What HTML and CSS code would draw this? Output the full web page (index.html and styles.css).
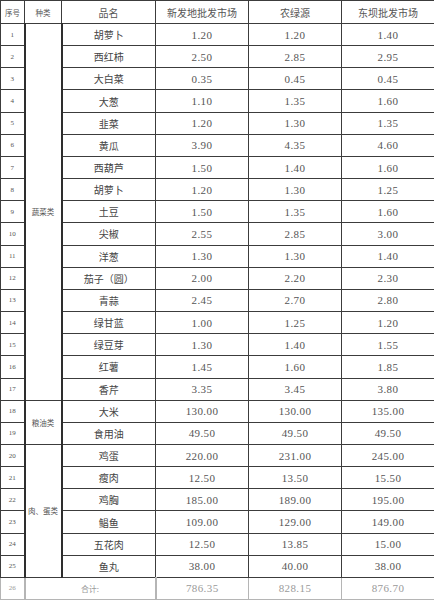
FILE: index.html
```html
<!DOCTYPE html>
<html lang="zh">
<head>
<meta charset="utf-8">
<title>价格表</title>
<link rel="stylesheet" href="styles.css">
</head>
<body>
<table class="price">
<colgroup>
<col class="c-no"><col class="c-kind"><col class="c-name"><col class="c-v"><col class="c-v"><col class="c-v">
</colgroup>
<thead>
<tr class="head"><th class="small">序号</th><th class="small">种类</th><th>品名</th><th>新发地批发市场</th><th>农绿源</th><th>东坝批发市场</th></tr>
</thead>
<tbody>
<tr><td class="no">1</td><td class="kind" rowspan="17">蔬菜类</td><td class="name">胡萝卜</td><td class="num">1.20</td><td class="num">1.20</td><td class="num">1.40</td></tr>
<tr><td class="no">2</td><td class="name">西红柿</td><td class="num">2.50</td><td class="num">2.85</td><td class="num">2.95</td></tr>
<tr><td class="no">3</td><td class="name">大白菜</td><td class="num">0.35</td><td class="num">0.45</td><td class="num">0.45</td></tr>
<tr><td class="no">4</td><td class="name">大葱</td><td class="num">1.10</td><td class="num">1.35</td><td class="num">1.60</td></tr>
<tr><td class="no">5</td><td class="name">韭菜</td><td class="num">1.20</td><td class="num">1.30</td><td class="num">1.35</td></tr>
<tr><td class="no">6</td><td class="name">黄瓜</td><td class="num">3.90</td><td class="num">4.35</td><td class="num">4.60</td></tr>
<tr><td class="no">7</td><td class="name">西葫芦</td><td class="num">1.50</td><td class="num">1.40</td><td class="num">1.60</td></tr>
<tr><td class="no">8</td><td class="name">胡萝卜</td><td class="num">1.20</td><td class="num">1.30</td><td class="num">1.25</td></tr>
<tr><td class="no">9</td><td class="name">土豆</td><td class="num">1.50</td><td class="num">1.35</td><td class="num">1.60</td></tr>
<tr><td class="no">10</td><td class="name">尖椒</td><td class="num">2.55</td><td class="num">2.85</td><td class="num">3.00</td></tr>
<tr><td class="no">11</td><td class="name">洋葱</td><td class="num">1.30</td><td class="num">1.30</td><td class="num">1.40</td></tr>
<tr><td class="no">12</td><td class="name">茄子（圆）</td><td class="num">2.00</td><td class="num">2.20</td><td class="num">2.30</td></tr>
<tr><td class="no">13</td><td class="name">青蒜</td><td class="num">2.45</td><td class="num">2.70</td><td class="num">2.80</td></tr>
<tr><td class="no">14</td><td class="name">绿甘蓝</td><td class="num">1.00</td><td class="num">1.25</td><td class="num">1.20</td></tr>
<tr><td class="no">15</td><td class="name">绿豆芽</td><td class="num">1.30</td><td class="num">1.40</td><td class="num">1.55</td></tr>
<tr><td class="no">16</td><td class="name">红薯</td><td class="num">1.45</td><td class="num">1.60</td><td class="num">1.85</td></tr>
<tr><td class="no">17</td><td class="name">香芹</td><td class="num">3.35</td><td class="num">3.45</td><td class="num">3.80</td></tr>
<tr><td class="no">18</td><td class="kind" rowspan="2">粮油类</td><td class="name">大米</td><td class="num">130.00</td><td class="num">130.00</td><td class="num">135.00</td></tr>
<tr><td class="no">19</td><td class="name">食用油</td><td class="num">49.50</td><td class="num">49.50</td><td class="num">49.50</td></tr>
<tr><td class="no">20</td><td class="kind" rowspan="6">肉、蛋类</td><td class="name">鸡蛋</td><td class="num">220.00</td><td class="num">231.00</td><td class="num">245.00</td></tr>
<tr><td class="no">21</td><td class="name">瘦肉</td><td class="num">12.50</td><td class="num">13.50</td><td class="num">15.50</td></tr>
<tr><td class="no">22</td><td class="name">鸡胸</td><td class="num">185.00</td><td class="num">189.00</td><td class="num">195.00</td></tr>
<tr><td class="no">23</td><td class="name">鲳鱼</td><td class="num">109.00</td><td class="num">129.00</td><td class="num">149.00</td></tr>
<tr><td class="no">24</td><td class="name">五花肉</td><td class="num">12.50</td><td class="num">13.85</td><td class="num">15.00</td></tr>
<tr><td class="no">25</td><td class="name">鱼丸</td><td class="num">38.00</td><td class="num">40.00</td><td class="num">38.00</td></tr>
<tr class="total"><td class="no">26</td><td class="kind total-label" colspan="2">合计:</td><td class="num">786.35</td><td class="num">828.15</td><td class="num">876.70</td></tr>
</tbody>
</table>
</body>
</html>
```

FILE: styles.css
```css
html, body {
  margin: 0;
  padding: 0;
  background: #ffffff;
}

body {
  width: 434px;
  height: 600px;
  overflow: hidden;
}

.price {
  border-collapse: collapse;
  table-layout: fixed;
  width: 433px;
  font-family: "Noto Sans CJK SC", "Liberation Serif", serif;
  color: #4a4a4a;
}

.c-no { width: 24px; }
.c-kind { width: 37px; }
.c-name { width: 94px; }
.c-v { width: 93px; }

.price th,
.price td {
  border: 1px solid #3c3c3c;
  padding: 0;
  text-align: center;
  vertical-align: middle;
  white-space: nowrap;
  overflow: hidden;
}

.price .head th {
  height: 22px;
  font-weight: normal;
  font-size: 10px;
  color: #555;
}

.price .head th.small {
  font-size: 7.5px;
}

.price tbody tr {
  height: 22.16px;
}

.price td.no {
  font-family: "Liberation Serif", serif;
  font-size: 7px;
  color: #555;
  border-right: 2px solid #2e2e2e;
}

.price td.kind {
  font-size: 7.5px;
  color: #555;
  border-right: 2px solid #2e2e2e;
}

.price td.name {
  font-size: 10px;
  color: #444;
}

.price td.num {
  font-family: "Liberation Serif", serif;
  font-size: 11px;
  letter-spacing: 0.4px;
  color: #555;
}

.price td.name + td.num {
  border-left: 1px solid #8a8a8a;
}

.price tr.total td {
  color: #9a9a9a;
  border-color: #b5b5b5;
  border-top: 1px solid #666;
}

.price tr.total td.total-label {
  font-size: 8px;
}
```
